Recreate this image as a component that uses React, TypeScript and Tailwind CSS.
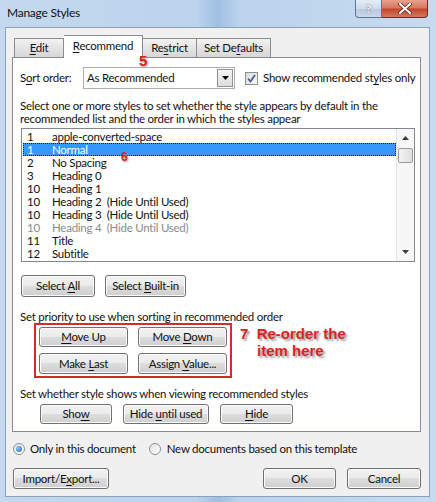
import React from "react";

const btn =
  "flex items-center justify-center whitespace-pre rounded-[3px] border border-[#707070] bg-[linear-gradient(#f2f2f2_0%,#ebebeb_49%,#dddddd_50%,#cfcfcf_100%)] shadow-[inset_0_0_0_1px_#fbfbfb] leading-none text-[#111]";

const rows: { n: string; name: string; sel?: boolean; dim?: boolean }[] = [
  { n: "1", name: "apple-converted-space" },
  { n: "1", name: "Normal", sel: true },
  { n: "2", name: "No Spacing" },
  { n: "3", name: "Heading 0" },
  { n: "10", name: "Heading 1" },
  { n: "10", name: "Heading 2  (Hide Until Used)" },
  { n: "10", name: "Heading 3  (Hide Until Used)" },
  { n: "10", name: "Heading 4  (Hide Until Used)", dim: true },
  { n: "11", name: "Title" },
  { n: "12", name: "Subtitle" },
];

function U({ children }: { children: React.ReactNode }) {
  return <span className="underline underline-offset-[2px]">{children}</span>;
}

function Btn({ className, children }: { className: string; children: React.ReactNode }) {
  return (
    <div className={`${btn} ${className}`}>
      <span>{children}</span>
    </div>
  );
}

function Radio({ on }: { on?: boolean }) {
  return (
    <div className="flex h-[12px] w-[12px] items-center justify-center rounded-full border border-[#8e8f8f] bg-[linear-gradient(135deg,#e4e4e4,#ffffff)]">
      {on && (
        <div className="h-[6px] w-[6px] rounded-full bg-[radial-gradient(circle_at_35%_35%,#8cc6f5,#1b69b6)]" />
      )}
    </div>
  );
}

export default function App() {
  return (
    <div className="flex h-[502px] w-[436px] flex-col overflow-hidden whitespace-nowrap bg-[linear-gradient(90deg,#c4d9ef_0%,#bcd3ec_45%,#9fbfe2_50%,#bcd3ec_55%,#c6dbf0_100%)] [font-family:Lato,'Liberation_Sans',sans-serif] text-[11.5px] tracking-[-0.25px] text-[#111]">
      {/* title bar */}
      <div className="flex h-[27px] shrink-0 items-start">
        <div className="pl-[7px] pt-[6px] text-[12px] leading-[14px]">Manage Styles</div>
        <div className="ml-auto mr-[8px] flex h-[18px]">
          <div className="flex w-[27px] items-center justify-center rounded-bl-[4px] border border-t-0 border-[#5f7490] bg-[linear-gradient(#e6edf5_0%,#cfdbe8_50%,#b7c8db_51%,#c9d8e8_100%)] text-[12px] font-bold text-[#f4f7fb] [text-shadow:0_0_2px_#4a5a70]">
            ?
          </div>
          <div className="flex w-[46px] items-center justify-center rounded-br-[4px] border border-l-0 border-t-0 border-[#6d2b22] bg-[linear-gradient(#e8a190_0%,#d6755d_48%,#c2452b_52%,#d2795f_100%)]">
            <svg width="14" height="11" viewBox="0 0 14 11">
              <path d="M2 1 L12 10 M12 1 L2 10" stroke="#5a1a12" strokeWidth="3.6" strokeLinecap="round" />
              <path d="M2 1 L12 10 M12 1 L2 10" stroke="#ffffff" strokeWidth="2.2" strokeLinecap="round" />
            </svg>
          </div>
        </div>
      </div>

      {/* client area */}
      <div className="mb-[5px] ml-[5px] mr-[6px] flex flex-1 flex-col border border-[#8aa0bb] bg-[#f0f0f0] pl-[6px] pr-[8px] pt-[7px]">
        {/* tabs */}
        <div className="relative z-10 flex h-[22px] items-end pl-[2px]">
          <div className="flex h-[19px] w-[50px] items-center justify-center border border-b-0 border-[#898c95] bg-[linear-gradient(#f3f3f3,#e3e3e3_50%,#d7d7d7)]">
            <span>
              <U>E</U>dit
            </span>
          </div>
          <div className="mb-[-1px] flex h-[23px] w-[79px] items-center justify-center border border-b-0 border-l-0 border-[#898c95] bg-white pb-[2px]">
            <span>
              <U>R</U>ecommend
            </span>
          </div>
          <div className="flex h-[19px] w-[54px] items-center justify-center border border-b-0 border-l-0 border-[#898c95] bg-[linear-gradient(#f3f3f3,#e3e3e3_50%,#d7d7d7)]">
            <span>
              Re<U>s</U>trict
            </span>
          </div>
          <div className="flex h-[19px] w-[74px] items-center justify-center border border-b-0 border-l-0 border-[#898c95] bg-[linear-gradient(#f3f3f3,#e3e3e3_50%,#d7d7d7)]">
            <span>
              Set De<U>f</U>aults
            </span>
          </div>
          <div className="absolute left-[127px] top-[18px] text-[15px] font-bold leading-none tracking-normal text-[#d8211f] [font-family:'Liberation_Sans',sans-serif] [text-shadow:1px_1px_2px_#999]">
            5
          </div>
        </div>

        {/* panel */}
        <div className="relative flex h-[375px] flex-col border border-[#898c95] bg-white pl-[7px]">
          <div className="mt-[9px] flex h-[22px] items-center">
            <div className="w-[63px] shrink-0">
              S<U>o</U>rt order:
            </div>
            <div className="flex h-[22px] w-[152px] shrink-0 items-center border border-[#abadb3] bg-white pl-[3px]">
              <span>As Recommended</span>
              <div className="ml-auto mr-[1px] flex h-[18px] w-[16px] items-center justify-center border border-[#8f9194] bg-[linear-gradient(#f4f4f4,#dcdcdc)]">
                <svg width="7" height="4" viewBox="0 0 7 4">
                  <path d="M0 0 H7 L3.5 4 Z" fill="#000" />
                </svg>
              </div>
            </div>
            <div className="ml-[10px] flex h-[13px] w-[13px] shrink-0 items-center justify-center border border-[#8e8f8f] bg-[linear-gradient(135deg,#dcdcdc,#fafafa)]">
              <svg width="9" height="9" viewBox="0 0 9 9">
                <path d="M1 4.5 L3.5 7.5 L8 1" fill="none" stroke="#4a5f97" strokeWidth="1.8" />
              </svg>
            </div>
            <div className="ml-[5px] shrink-0">
              Show recommended st<U>y</U>les only
            </div>
          </div>

          <div className="mt-[10px] leading-[13px]">
            Select one or more styles to set whether the style appears by default in the
            <br />
            recommended list and the order in which the styles appear
          </div>

          {/* list */}
          <div className="ml-[1px] mt-[3px] flex h-[134px] w-[394px] border border-[#828790] bg-white">
            <div className="relative flex flex-1 flex-col pl-[1px] pt-[1px]">
              {rows.map((r, i) => (
                <div
                  key={i}
                  className={`flex h-[13px] items-center whitespace-pre pl-[3px] leading-none ${
                    r.sel
                      ? "border border-dotted border-[#1c1c1c] bg-[#3399ff] text-white"
                      : r.dim
                      ? "border border-transparent text-[#8b8b8b]"
                      : "border border-transparent"
                  }`}
                >
                  <span className="w-[25px]">{r.n}</span>
                  <span>{r.name}</span>
                </div>
              ))}
              <div className="absolute left-[99px] top-[22px] text-[12px] font-bold leading-none tracking-normal text-[#d8211f] [font-family:'Liberation_Sans',sans-serif] [text-shadow:1px_1px_2px_#999]">
                6
              </div>
            </div>
            <div className="flex w-[18px] flex-col items-center border-l border-[#e6e6e6] bg-[#f7f7f7]">
              <svg className="mt-[7px]" width="7" height="4" viewBox="0 0 7 4">
                <path d="M0 4 H7 L3.5 0 Z" fill="#3a3a3a" />
              </svg>
              <div className="mt-[8px] h-[15px] w-[15px] rounded-[2px] border border-[#9a9a9a] bg-[linear-gradient(90deg,#f3f3f3,#dedede)]" />
              <svg className="mb-[7px] mt-auto" width="7" height="4" viewBox="0 0 7 4">
                <path d="M0 0 H7 L3.5 4 Z" fill="#3a3a3a" />
              </svg>
            </div>
          </div>

          <div className="ml-[1px] mt-[13px] flex gap-[10px]">
            <Btn className="h-[22px] w-[74px]">
              Select <U>A</U>ll
            </Btn>
            <Btn className="h-[22px] w-[81px]">
              Select <U>B</U>uilt-in
            </Btn>
          </div>

          <div className="mt-[13px] leading-[13px]">Set priority to use when sorting in recommended order</div>

          <div className="flex items-start">
            <div className="ml-[14px] grid h-[55px] w-[198px] grid-cols-[89px_89px] content-start gap-x-[10px] gap-y-[6px] border-2 border-[#d42b2b] pl-[3px] pt-[2px]">
              <Btn className="h-[20px]">
                <U>M</U>ove Up
              </Btn>
              <Btn className="h-[20px]">
                Move <U>D</U>own
              </Btn>
              <Btn className="h-[21px]">
                Make <U>L</U>ast
              </Btn>
              <Btn className="h-[21px]">
                Assign <U>V</U>alue...
              </Btn>
            </div>
            <div className="ml-[8px] mt-[2px] text-[15px] font-bold leading-[17px] tracking-normal text-[#e0201c] [font-family:'Liberation_Sans',sans-serif] [text-shadow:2px_2px_2px_#9a9a9a]">
              <div className="whitespace-pre">7  Re-order the</div>
              <div className="pl-[17px]">item here</div>
            </div>
          </div>

          <div className="mt-[9px] leading-[13px]">Set whether style shows when viewing recommended styles</div>

          <div className="ml-[20px] mt-[4px] flex gap-[11px]">
            <Btn className="h-[20px] w-[72px]">
              Sho<U>w</U>
            </Btn>
            <Btn className="h-[20px] w-[86px]">
              Hide <U>u</U>ntil used
            </Btn>
            <Btn className="h-[20px] w-[73px]">
              <U>H</U>ide
            </Btn>
          </div>
        </div>

        {/* radios */}
        <div className="ml-[1px] mt-[10px] flex h-[14px] items-center">
          <Radio on />
          <span className="ml-[5px]">Only in this document</span>
          <div className="ml-[13px]">
            <Radio />
          </div>
          <span className="ml-[6px]">New documents based on this template</span>
        </div>

        {/* bottom buttons */}
        <div className="mt-[12px] flex">
          <Btn className="ml-[1px] h-[21px] w-[96px]">
            Import/E<U>x</U>port...
          </Btn>
          <Btn className="ml-auto h-[21px] w-[73px] border-[#3c7fb1] shadow-[inset_0_0_0_1px_#c7e6fb]">OK</Btn>
          <Btn className="ml-[11px] h-[21px] w-[74px]">Cancel</Btn>
        </div>
      </div>
    </div>
  );
}
